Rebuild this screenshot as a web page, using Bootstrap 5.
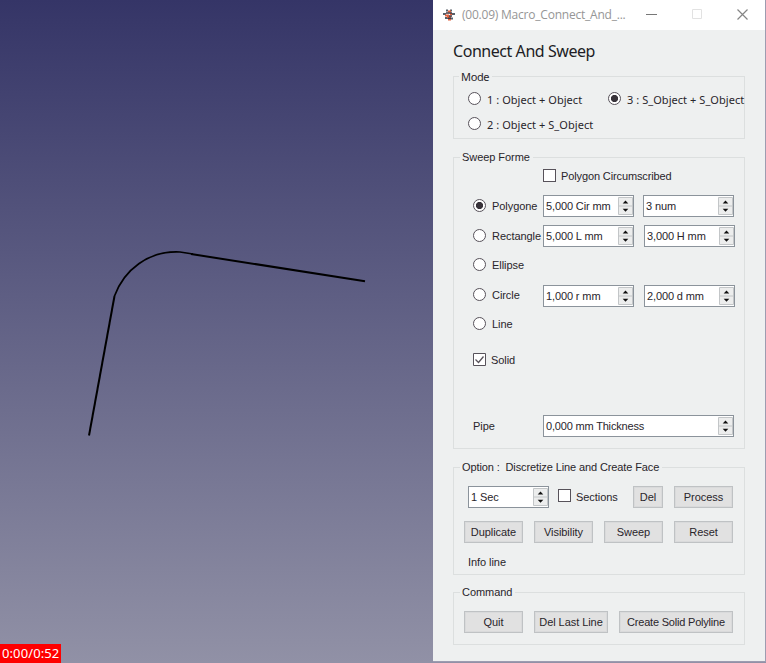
<!DOCTYPE html>
<html lang="en">
<head>
<meta charset="utf-8">
<title>Connect And Sweep</title>
<link href="https://cdn.jsdelivr.net/npm/bootstrap@5.3.0/dist/css/bootstrap.min.css" rel="stylesheet">
<style>
body{width:766px;height:663px;overflow:hidden;background:linear-gradient(#353567,#9191a6);font:11px/14px "Liberation Sans",Arial,sans-serif;color:#29252b;letter-spacing:-.06px}
.viewport3d{width:433px}
.timer{background:#f00;color:#fff;width:61px;height:19px;font:13px/19px "Noto Sans","Open Sans",sans-serif;padding-left:2px;letter-spacing:.1px;white-space:nowrap}
.dialog{width:333px;height:662px;background:#eef0f0;border:solid #9d9cb0;border-width:0 1px 1px 0}
.titlebar{height:30px;background:#fff;color:#969696;font:12px/28px "Open Sans",sans-serif}
.app-icon{margin-left:9px}
.title-txt{width:175px;margin-left:6px;white-space:nowrap;letter-spacing:-.22px}
.heading{font:16px/22px "Noto Sans","Open Sans",sans-serif;color:#201c24;letter-spacing:-.45px;margin:10px 0 0 20px;height:36px}
.group{width:292px;margin-left:20px;border:1px solid #dcdfdf}
.legend{display:table;background:#eef0f0;margin:-8px 0 0 6px;padding:0 3px 0 2px;height:15px;line-height:15px;white-space:pre}
.tah{font-family:"Noto Sans","Open Sans",sans-serif;letter-spacing:.05px}
.tah .legend{margin-left:5px;letter-spacing:-.35px}
.opt{white-space:nowrap;display:flex;flex:none;align-items:center;gap:6px}
.opt>span{position:relative;top:1px}
.tah .d-flex .opt>span{top:2px}
.rad,.chk{width:13px;height:13px;flex:none;background:#fff;border:1px solid #57525a}
.rad{border-radius:50%}
.rad.on{background:radial-gradient(circle,#38333a 0 3.2px,#fff 4px)}
.shape-row>.opt,.up{position:relative;top:-1px}
.spin{height:22px;border:1px solid #8b939b;background:#fff;display:flex;align-items:center;padding:0 0 0 2px;white-space:nowrap;letter-spacing:-.12px}
.spin svg{margin-left:auto;flex:none}
.pb{height:22px;background:#e1e1e1;border:1px solid #bfc2c4;box-shadow:inset 0 0 0 1px #d9dadb;display:flex;align-items:center;justify-content:center;white-space:nowrap}
.tight{letter-spacing:-.2px}
.w59{width:59px}.w91{width:91px}
.c1{width:70px}
</style>
<script src="https://cdn.jsdelivr.net/npm/bootstrap@5.3.0/dist/js/bootstrap.bundle.min.js"></script>
</head>
<body class="d-flex">
<svg width="0" height="0" class="position-absolute"><defs>
<symbol id="ud" viewBox="0 0 15 18"><path d="M.5.5h14v17H.5zM.5 9h14" fill="#eceded" stroke="#c3c6c8"/><path d="M4.700 6.500h5.600L7.500 3.500zM4.700 11.800h5.600l-2.800 3z" fill="#111"/></symbol>
</defs></svg>
<main class="viewport3d d-flex flex-column justify-content-between">
<svg width="433" height="600" fill="none" stroke="#000" stroke-width="2"><path d="M89 435.500L114.500 296"/><path d="M114.500 296C124 270 148 250.500 180 252L193 254" stroke-width="1.700"/><path d="M191 254L365 281.300"/></svg>
<div class="timer">0:00/0:52</div>
</main>
<section class="dialog d-flex flex-column">
<header class="titlebar d-flex align-items-center">
<svg class="app-icon" width="14" height="12" viewBox="0 0 14 12"><path d="M4 1.500h2M8 1.500h2M1 5h3M10 5h3M3 9h3M9 9.500h2" stroke="#58606a" stroke-width="2.200"/><path d="M6 2.500h3M3 6.500h4M8 5h2M5 8h4M6 10.500h3" stroke="#e2603c" stroke-width="1.800"/><path d="M4 4h6M7 7h3M6 9.300h3" stroke="#443a43" stroke-width="1.400"/></svg>
<div class="title-txt">(00.09) Macro_Connect_And_...</div>
<svg width="112" height="28" fill="none"><path d="M9 13.500h11" stroke="#777"/><path d="M55.500 8.500h9v9h-9z" stroke="#e2e2e2"/><path d="M100.500 8.500l10 10M110.500 8.500l-10 10" stroke="#858585" stroke-width="1.200"/></svg>
</header>
<div class="heading">Connect And Sweep</div>

<div class="group tah" style="height:63px">
<div class="legend">Mode</div>
<div class="d-flex" style="margin:1px 0 0 14px;height:26px">
<div class="opt" style="width:140px"><i class="rad"></i><span>1 : Object + Object</span></div>
<div class="opt"><i class="rad on"></i><span>3 : S_Object + S_Object</span></div>
</div>
<div class="opt" style="margin-left:14px;height:25px"><i class="rad"></i><span>2 : Object + S_Object</span></div>
</div>

<div class="group" style="height:292px;margin-top:18px">
<div class="legend">Sweep Forme</div>
<div class="opt up" style="height:22px;margin-left:89px;gap:5px;letter-spacing:-.12px"><i class="chk"></i><span>Polygon Circumscribed</span></div>
<div class="shape-row d-flex align-items-center" style="height:30px;margin:4px 0 0 19px"><div class="c1 opt"><i class="rad on"></i><span>Polygone</span></div><div class="spin w91">5,000 Cir mm<svg width="15" height="18"><use href="#ud"/></svg></div><div class="spin w91" style="margin-left:9px">3 num<svg width="15" height="18"><use href="#ud"/></svg></div></div>
<div class="shape-row d-flex align-items-center" style="height:30px;margin-left:19px"><div class="c1 opt"><i class="rad"></i><span>Rectangle</span></div><div class="spin w91">5,000 L mm<svg width="15" height="18"><use href="#ud"/></svg></div><div class="spin w91" style="margin-left:10px">3,000 H mm<svg width="15" height="18"><use href="#ud"/></svg></div></div>
<div class="opt up" style="height:28px;margin-left:19px"><i class="rad"></i><span>Ellipse</span></div>
<div class="shape-row d-flex align-items-center" style="height:32px;margin-left:19px"><div class="c1 opt"><i class="rad"></i><span>Circle</span></div><div class="spin w91" style="margin-top:2px">1,000 r mm<svg width="15" height="18"><use href="#ud"/></svg></div><div class="spin w91" style="margin:2px 0 0 10px">2,000 d mm<svg width="15" height="18"><use href="#ud"/></svg></div></div>
<div class="opt up" style="height:26px;margin-left:19px"><i class="rad"></i><span>Line</span></div>
<div class="opt up" style="height:46px;margin-left:19px;gap:5px"><svg width="13" height="13" fill="#fff" stroke="#57525a"><path d="M.5.5h12v12H.5z"/><path d="M2.500 6.500l3 3 5-6" fill="none" stroke-width="1.300"/></svg><span>Solid</span></div>
<div class="d-flex align-items-center" style="margin:32px 0 0 19px"><div class="c1">Pipe</div><div class="spin" style="width:191px;letter-spacing:-.18px">0,000 mm Thickness<svg width="15" height="18"><use href="#ud"/></svg></div></div>
</div>

<div class="group" style="height:108px;margin-top:18px">
<div class="legend" style="letter-spacing:-.11px">Option :  Discretize Line and Create Face</div>
<div class="d-flex align-items-center" style="margin:10px 0 0 14px;height:23px"><div class="spin" style="width:81px">1 Sec<svg width="15" height="18"><use href="#ud"/></svg></div><div class="opt up" style="width:75px;margin-left:9px;gap:5px"><i class="chk"></i><span>Sections</span></div><div class="pb" style="width:30px">Del</div><div class="pb w59" style="margin-left:11px">Process</div></div>
<div class="d-flex" style="gap:11px;margin:13px 0 0 10px"><div class="pb w59">Duplicate</div><div class="pb w59">Visibility</div><div class="pb w59">Sweep</div><div class="pb w59">Reset</div></div>
<div style="margin:12px 0 0 14px">Info line</div>
</div>

<div class="group" style="height:53px;margin-top:17px">
<div class="legend">Command</div>
<div class="d-flex" style="gap:11px;margin:11px 0 0 10px"><div class="pb w59">Quit</div><div class="pb" style="width:74px">Del Last Line</div><div class="pb tight" style="width:114px">Create Solid Polyline</div></div>
</div>
</section>
</body>
</html>
